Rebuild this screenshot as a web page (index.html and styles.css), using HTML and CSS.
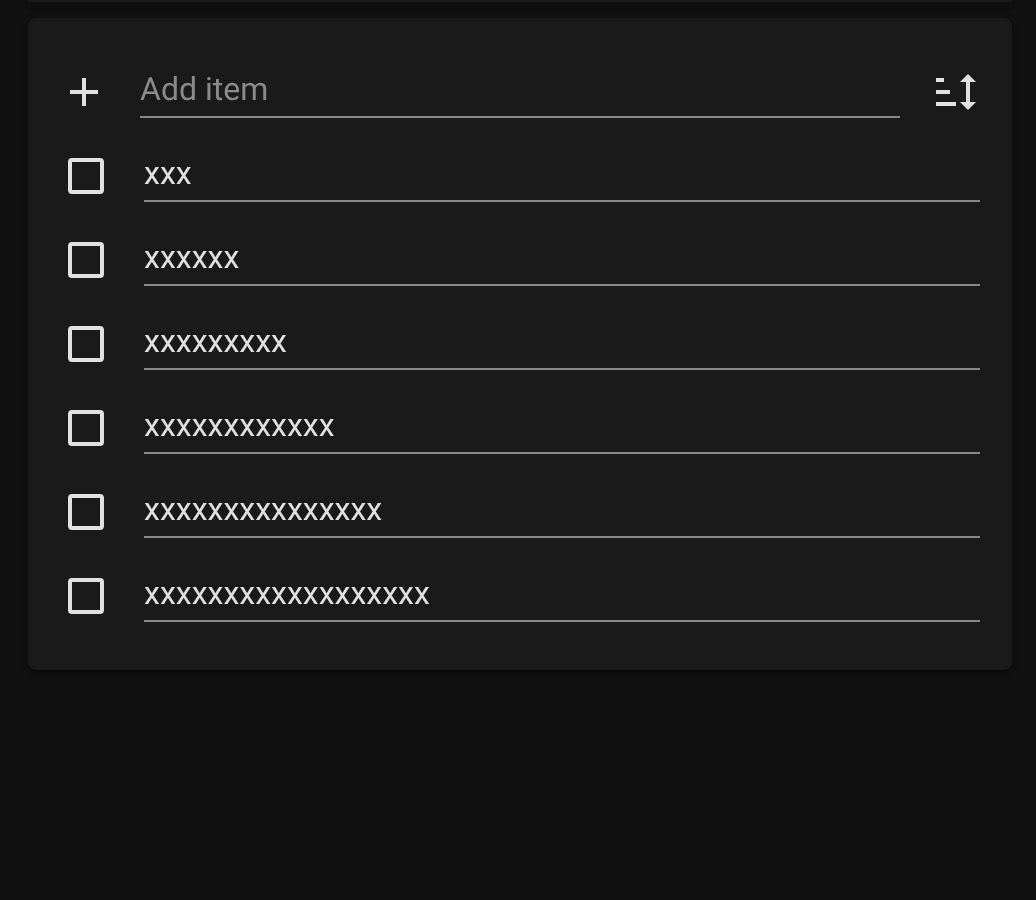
FILE: index.html
```html
<!DOCTYPE html>
<html lang="en">
<head>
    <meta charset="UTF-8">
    <title>Shopping list</title>
    <link rel="stylesheet" href="styles.css">
</head>
<body>
    <!-- Bottom edge of the card above -->
    <div class="prev-card"></div>

    <div class="card">
        <div class="add-row">
            <svg class="add-icon" width="30" height="30" viewBox="0 0 30 30">
                <path d="M13 1h4v12h12v4H17v12h-4V17H1v-4h12z"/>
            </svg>
            <div class="add-field">Add item</div>
            <svg class="sort-icon" width="40" height="36" viewBox="0 0 40 36">
                <path d="M0 4h8v4H0zM0 16h14v4H0zM0 28h20v4H0z"/>
                <path d="M32 0l8 8h-6v20h6l-8 8-8-8h6V8h-6z"/>
            </svg>
        </div>

        <div class="item">
            <div class="checkbox"></div>
            <div class="item-text">xxx</div>
        </div>
        <div class="item">
            <div class="checkbox"></div>
            <div class="item-text">xxxxxx</div>
        </div>
        <div class="item">
            <div class="checkbox"></div>
            <div class="item-text">xxxxxxxxx</div>
        </div>
        <div class="item">
            <div class="checkbox"></div>
            <div class="item-text">xxxxxxxxxxxx</div>
        </div>
        <div class="item">
            <div class="checkbox"></div>
            <div class="item-text">xxxxxxxxxxxxxxx</div>
        </div>
        <div class="item">
            <div class="checkbox"></div>
            <div class="item-text">xxxxxxxxxxxxxxxxxx</div>
        </div>
    </div>
</body>
</html>
```

FILE: styles.css
```css
body {
    margin: 0;
    height: 900px;
    overflow: hidden;
    background-color: #111111;
    font-family: Roboto, sans-serif;
    color: #e1e1e1;
    text-rendering: geometricPrecision;
}

.prev-card {
    height: 2px;
    margin: 0 24px 0 28px;
    background-color: #1a1a1a;
    border-radius: 0 0 8px 8px;
    box-shadow: 0 4px 4px rgba(0, 0, 0, 0.14), 0 2px 10px rgba(0, 0, 0, 0.12), 0 6px 2px -4px rgba(0, 0, 0, 0.2);
}

.card {
    margin: 16px 24px 0 28px;
    height: 652px;
    box-sizing: border-box;
    padding: 42px 32px 0 40px;
    background-color: #1a1a1a;
    border-radius: 8px;
    box-shadow: 0 4px 4px rgba(0, 0, 0, 0.14), 0 2px 10px rgba(0, 0, 0, 0.12), 0 6px 2px -4px rgba(0, 0, 0, 0.2);
}

.add-row {
    display: flex;
    align-items: flex-start;
    height: 72px;
}

.add-icon {
    fill: #e1e1e1;
    margin: 17px 0 0 1px;
    flex: none;
}

.add-field {
    width: 760px;
    height: 58px;
    margin-left: 41px;
    box-sizing: border-box;
    border-bottom: 2px solid #8a8a8a;
    padding-top: 10px;
    font-size: 32px;
    line-height: 38px;
    color: #8a8a8a;
}

.sort-icon {
    fill: #e1e1e1;
    margin: 14px 0 0 36px;
    flex: none;
}

.item {
    display: flex;
    align-items: flex-start;
    height: 84px;
}

.checkbox {
    width: 36px;
    height: 36px;
    margin-top: 26px;
    box-sizing: border-box;
    border: 4px solid #e1e1e1;
    border-radius: 4px;
    flex: none;
}

.item-text {
    flex: 1;
    height: 70px;
    margin-left: 40px;
    box-sizing: border-box;
    border-bottom: 2px solid #8a8a8a;
    padding-top: 22px;
    font-size: 32px;
    line-height: 38px;
}

/* own layer so the text is greyscale antialiased like the original */
.add-field, .item-text {
    will-change: transform;
}
```
